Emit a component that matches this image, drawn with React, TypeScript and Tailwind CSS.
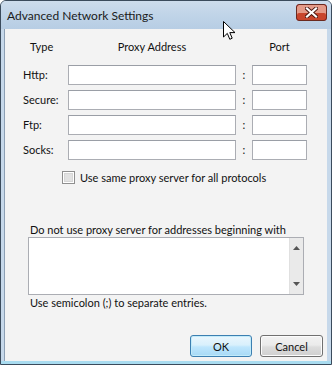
import React from "react";

const font = { fontFamily: 'Lato, "Open Sans", sans-serif' };

function TextBox({ w }: { w: string }) {
  return <div className={`${w} h-[20px] bg-white border border-[#abadb3] border-t-[#9a9ea6]`} />;
}

function CloseButton() {
  return (
    <div className="relative -mt-[5px] w-[31px] h-[17px] rounded-[3px] border border-[#6a2a20] bg-red-600 shadow-[inset_0_8px_0_0_#e49a88,inset_0_-9px_0_0_#c8452c] flex items-center justify-center">
      <svg width="13" height="11" viewBox="0 0 13 11" className="relative">
        <path d="M2 1.5 L11 9.5 M11 1.5 L2 9.5" stroke="#4a1710" strokeWidth="4" strokeLinecap="square" />
        <path d="M2 1.5 L11 9.5 M11 1.5 L2 9.5" stroke="#ffffff" strokeWidth="2.2" strokeLinecap="square" />
      </svg>
    </div>
  );
}

export default function App() {
  const rows = ["Http:", "Secure:", "Ftp:", "Socks:"];
  return (
    <div className="relative w-[332px] h-[365px] overflow-hidden bg-[#c6d8ea] border border-[#3b4b5c] rounded-t-[6px] text-[#111] text-[11px]" style={font}>
      {/* title bar */}
      <div className="h-[28px] flex items-center justify-between pl-[6px] pr-[4px] bg-[linear-gradient(to_bottom,#cddcec,#c0d4e8_50%,#b7cde4)]">
        <span className="text-[12px] text-[#1b1b1b] leading-none mt-[1px]">Advanced Network Settings</span>
        <CloseButton />
      </div>
      {/* client frame */}
      <div className="pl-[3px] pr-[4px] pb-[3px]">
        <div className="h-[332px] bg-[#f3f3f3] border-l border-[#8c9fb4] flex flex-col">
          <div className="pt-[10px] pl-[18px]">
            <div className="grid grid-cols-[45px_168px_16px_55px] gap-y-[5px] items-center">
              <div className="h-[16px] leading-[16px] pl-[7px] mb-[5px]">Type</div>
              <div className="h-[16px] leading-[16px] text-center mb-[5px]">Proxy Address</div>
              <div className="mb-[5px]" />
              <div className="h-[16px] leading-[16px] text-center mb-[5px]">Port</div>
              {rows.map((r) => (
                <React.Fragment key={r}>
                  <div className="leading-[16px]">{r}</div>
                  <TextBox w="w-[168px]" />
                  <div className="text-center leading-[16px]">:</div>
                  <TextBox w="w-[55px]" />
                </React.Fragment>
              ))}
            </div>
          </div>
          <div className="mt-[11px] pl-[57px] flex items-center gap-[5px] h-[13px]">
            <div className="w-[13px] h-[13px] border border-[#8f8f8f] bg-white p-[1px]">
              <div className="w-full h-full bg-[#e2e2e2] border border-[#d6d6d6]" />
            </div>
            <span className="leading-[16px]">Use same proxy server for all protocols</span>
          </div>
          <div className="mt-[38px] pl-[25px] leading-[15px] h-[15px]">Do not use proxy server for addresses beginning with</div>
          <div className="ml-[23px] w-[276px] h-[58px] bg-white border border-[#abadb3] flex justify-end">
            <div className="w-[14px] h-full bg-[#eaeaea] border-l border-[#e0e0e0] flex flex-col items-center justify-between py-[8px]">
              <svg width="7" height="4" viewBox="0 0 7 4"><path d="M0 4 L3.5 0 L7 4 Z" fill="#555" /></svg>
              <svg width="7" height="4" viewBox="0 0 7 4"><path d="M0 0 L3.5 4 L7 0 Z" fill="#555" /></svg>
            </div>
          </div>
          <div className="pl-[25px] leading-[16px] h-[16px]">Use semicolon (;) to separate entries.</div>
          <div className="mt-[24px] flex justify-end gap-[8px] pr-[4px]">
            <button className="w-[62px] h-[22px] rounded-[3px] border border-[#3c7fb1] bg-[linear-gradient(to_bottom,#eaf6fd,#d9f0fc_45%,#bee6fd_55%,#a7d9f5)] shadow-[inset_0_0_0_1px_#c2ebfa] leading-none">OK</button>
            <button className="w-[63px] h-[22px] rounded-[3px] border border-[#707070] bg-[linear-gradient(to_bottom,#f2f2f2,#ebebeb_45%,#dddddd_55%,#cfcfcf)] shadow-[inset_0_0_0_1px_#fcfcfc] leading-none">Cancel</button>
          </div>
        </div>
      </div>
      <div className="absolute left-0 right-0 bottom-0 h-[3px] bg-[#a9dcf0]" />
      {/* mouse cursor */}
      <svg className="absolute left-[222px] top-[20px]" width="13" height="20" viewBox="0 0 13 20">
        <path d="M0.5 0.5 L0.5 16 L4.3 12.4 L6.8 18.3 L9.2 17.2 L6.8 11.6 L12 11.6 Z" fill="#fff" stroke="#000" strokeWidth="1" strokeLinejoin="miter" />
      </svg>
    </div>
  );
}
